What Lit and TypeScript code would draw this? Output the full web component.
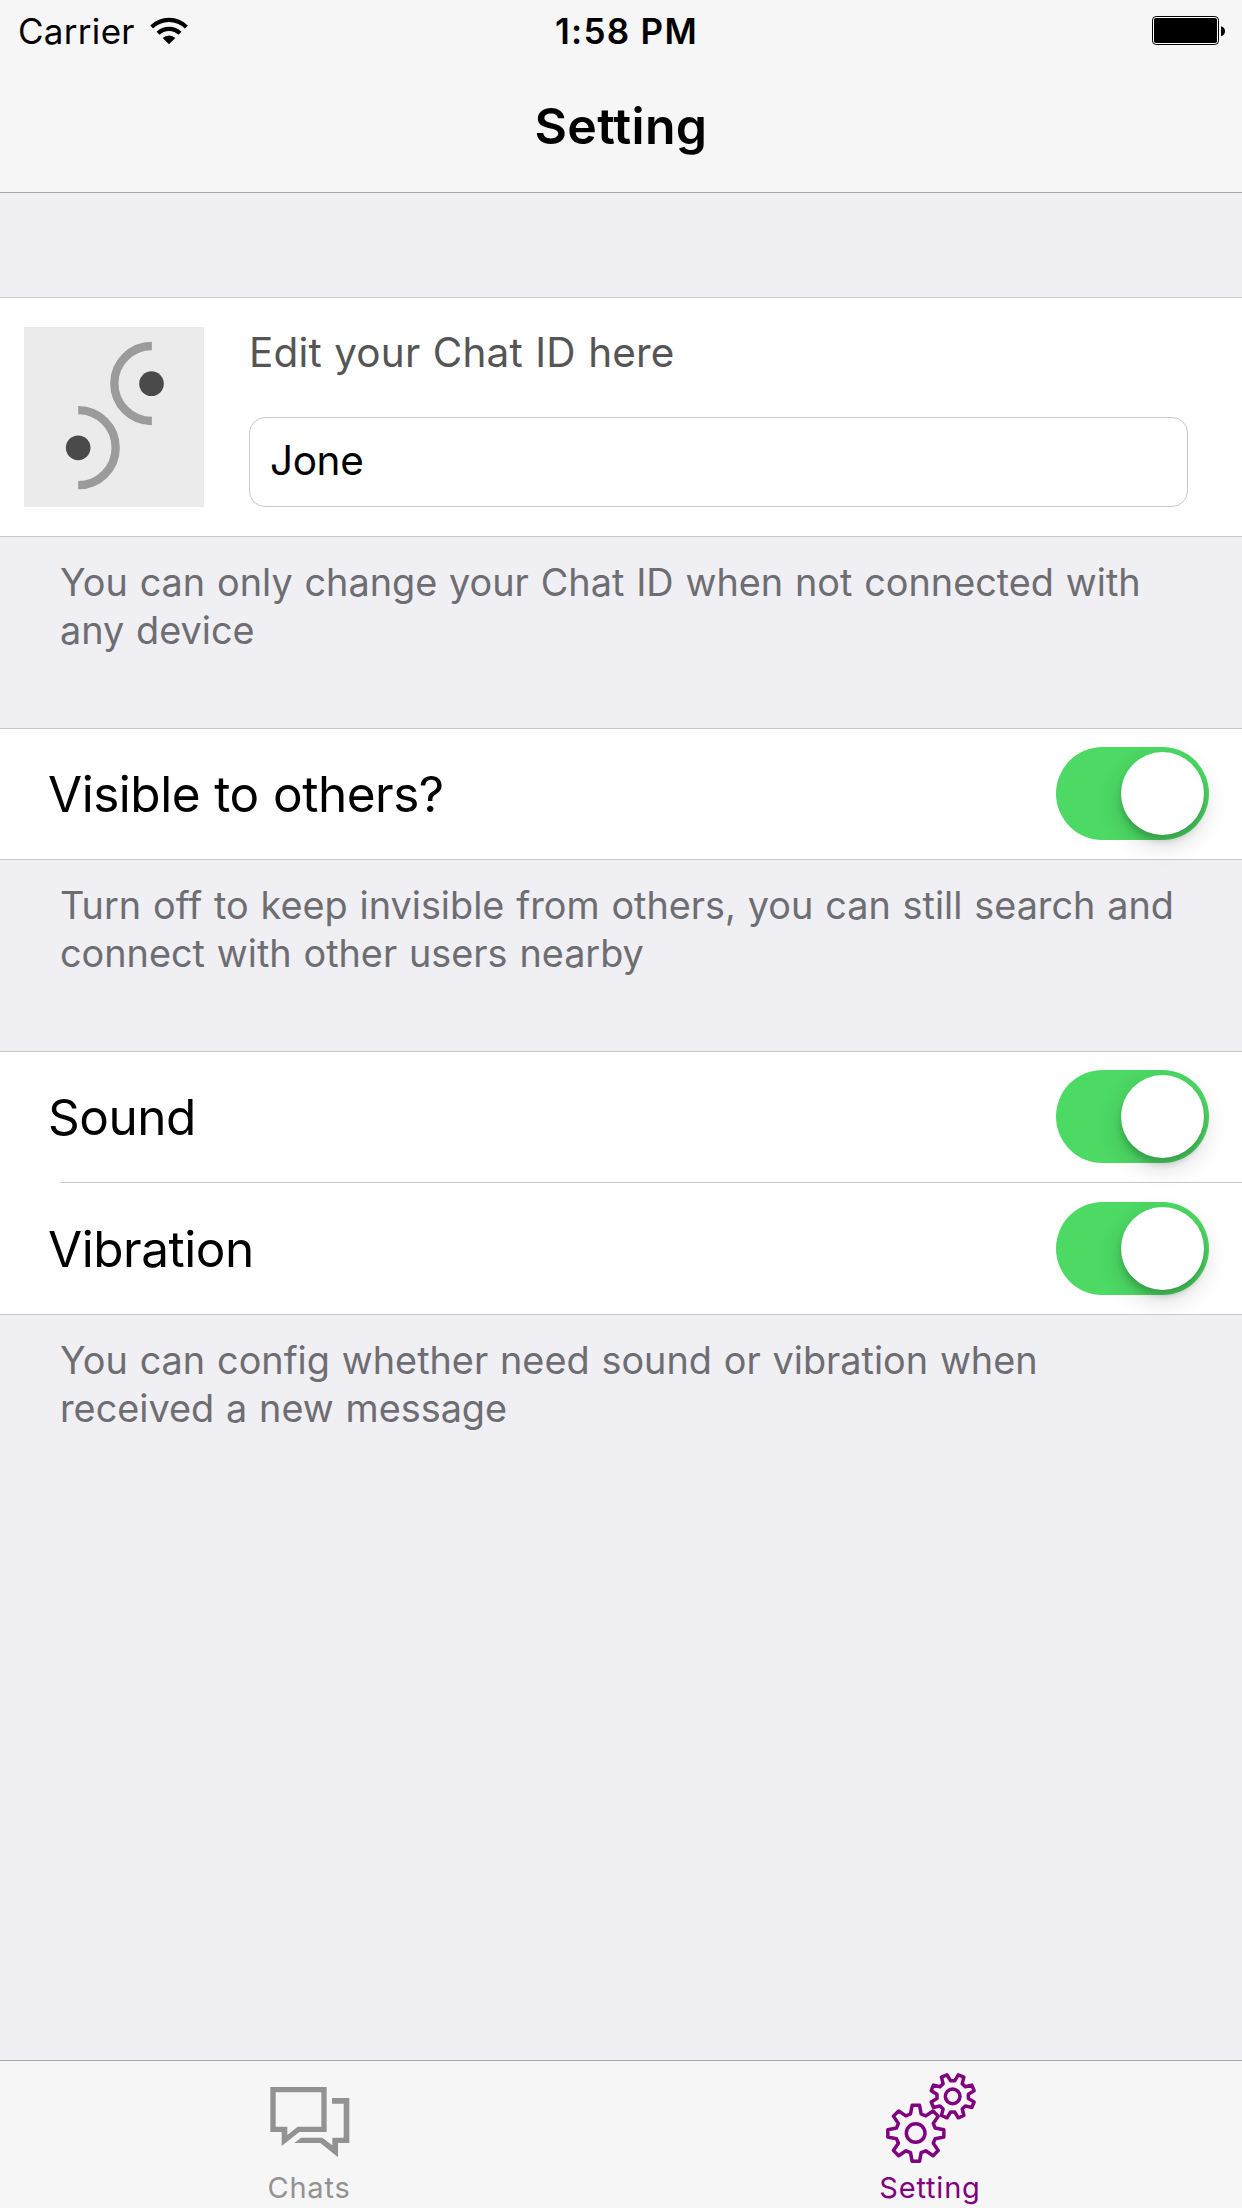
import { LitElement, html, css, svg } from "lit";
import { customElement, property } from "lit/decorators.js";

// Closed outline of a gear with trapezoid teeth, centred on (cx, cy).
function gearPath(cx: number, cy: number, teeth: number, tip: number, root: number, tipHalf: number, rootHalf: number, turn: number): string {
  const points: string[] = [];
  for (let i = 0; i < teeth; i++) {
    const a = turn + (i * 2 * Math.PI) / teeth;
    const corners = [[root, -rootHalf], [tip, -tipHalf], [tip, tipHalf], [root, rootHalf]];
    for (const [r, w] of corners) {
      const x = cx + r * Math.sin(a) + w * Math.cos(a);
      const y = cy - r * Math.cos(a) + w * Math.sin(a);
      points.push(`${x.toFixed(1)},${y.toFixed(1)}`);
    }
  }
  return `M${points.join("L")}Z`;
}

@customElement("ios-switch")
export class IosSwitch extends LitElement {
  static styles = css`
    :host { display: block; flex: none; margin-bottom: 1px; }
    .track {
      box-sizing: border-box; width: 153px; height: 93px; border-radius: 47px;
      background: #4cd964; display: flex; justify-content: flex-end; align-items: center; padding-right: 5px;
    }
    .knob {
      width: 83px; height: 83px; border-radius: 50%; background: #fff;
      box-shadow: 0 9px 24px rgba(0, 0, 0, 0.17), 0 6px 6px rgba(0, 0, 0, 0.16);
    }
  `;
  render() {
    return html`<div class="track" role="switch" aria-checked="true"><div class="knob"></div></div>`;
  }
}

@customElement("setting-row")
export class SettingRow extends LitElement {
  @property() label = "";
  static styles = css`
    :host { display: block; }
    .row { box-sizing: border-box; height: 130px; padding: 0 33px 0 48px; display: flex; align-items: center; justify-content: space-between; }
    .label { font-size: 49.5px; line-height: 60px; letter-spacing: -0.48px; word-spacing: 0.8px; white-space: nowrap; }
  `;
  render() {
    return html`<div class="row"><span class="label">${this.label}</span><ios-switch></ios-switch></div>`;
  }
}

@customElement("app-root")
export class AppRoot extends LitElement {
  static styles = css`
    :host {
      display: flex; flex-direction: column; width: 1242px; height: 2208px; overflow: hidden;
      background: #efeff4; color: #000; font-family: Inter, "Liberation Sans", sans-serif;
    }
    svg { display: block; flex: none; }
    .nav { flex: none; background: #f6f6f7; border-bottom: 1px solid #a7a7aa; }
    .status {
      box-sizing: border-box; height: 60px; padding: 2px 17px 0 18px; display: grid;
      grid-template-columns: 1fr auto 1fr; align-items: center; font-size: 35px; line-height: 42px;
    }
    .carrier { display: flex; align-items: center; gap: 15px; letter-spacing: 0.3px; }
    .time { font-weight: 600; letter-spacing: 1.3px; margin-left: 10px; }
    .battery { justify-self: end; margin-top: -1px; }
    .title { height: 132px; line-height: 132px; text-align: center; font-size: 50px; font-weight: 600; letter-spacing: 0.3px; }
    .group { flex: none; background: #fff; border-top: 1px solid #c8c7cc; border-bottom: 1px solid #c8c7cc; }
    .group-profile { margin-top: 104px; }
    .profile { box-sizing: border-box; height: 238px; padding: 0 54px 29px 24px; display: flex; align-items: flex-end; gap: 45px; }
    .fields { flex: 1; display: flex; flex-direction: column; gap: 34px; }
    .prompt { font-size: 40.5px; line-height: 60px; color: #555; white-space: nowrap; letter-spacing: 0.15px; word-spacing: 0.9px; }
    .input {
      box-sizing: border-box; height: 90px; border: 1px solid #c9c9c9; border-radius: 16px;
      padding: 0 20px 3px; font-size: 40.5px; line-height: 85px; letter-spacing: -0.4px;
    }
    .note { box-sizing: border-box; flex: none; padding: 21px 40px 0 60px; font-size: 37.8px; line-height: 48px; word-spacing: 1.25px; color: #6d6d72; white-space: pre-line; }
    .note-tall { height: 191px; }
    .divider { height: 1px; margin-left: 60px; background: #c8c7cc; }
    .last { padding-top: 1px; }
    .tabs { flex: none; margin-top: auto; height: 147px; border-top: 1px solid #a7a7aa; background: #f6f6f7; display: grid; grid-template-columns: 1fr 1fr; }
    .tab { display: flex; flex-direction: column; align-items: center; padding-right: 3px; font-size: 29px; line-height: 36px; letter-spacing: 0.8px; color: #929292; }
    .tab-active { color: #800080; }
    .tab-label { margin-top: 6px; }
  `;

  render() {
    return html`
      <header class="nav">
        <div class="status">
          <div class="carrier">
            <span>Carrier</span>
            <svg width="38" height="28" viewBox="448 46 114 84" fill="none" stroke="#000" stroke-width="12.5">
              <path d="M453 76A73.5 73.5 0 0 1 557 76" />
              <path d="M472 95A47 47 0 0 1 538 95" />
              <path d="M505 128L486 109A27 27 0 0 1 524 109Z" fill="#000" stroke="none" />
            </svg>
          </div>
          <span class="time">1:58 PM</span>
          <svg class="battery" width="73" height="29" viewBox="156 47 219 87">
            <rect x="157.5" y="48.5" width="198" height="84" rx="11" fill="#fff" stroke="#000" stroke-width="3" />
            <rect x="162" y="53" width="189" height="75" rx="6" />
            <path d="M363 78Q375 81 375 93T363 108Z" />
          </svg>
        </div>
        <div class="title"><span class="title-text">Setting</span></div>
      </header>

      <section class="group group-profile">
        <div class="profile">
          <svg width="180" height="180" viewBox="72 141 540 540">
            <rect x="72" y="141" width="540" height="540" fill="#ebebeb" />
            <g fill="none" stroke="#9b9b9b" stroke-width="25">
              <path d="M455.500 198A112.500 112.500 0 0 0 455.500 423" />
              <path d="M234.500 390.500A112.500 112.500 0 0 1 234.500 615.500" />
            </g>
            <circle cx="454.500" cy="311" r="37" fill="#4a4a4a" />
            <circle cx="234.500" cy="503.500" r="37" fill="#4a4a4a" />
          </svg>
          <div class="fields">
            <span class="prompt">Edit your Chat ID here</span>
            <div class="input">Jone</div>
          </div>
        </div>
      </section>
      <div class="note note-tall">You can only change your Chat ID when not connected with
any device</div>

      <section class="group"><setting-row label="Visible to others?"></setting-row></section>
      <div class="note note-tall">Turn off to keep invisible from others, you can still search and
connect with other users nearby</div>

      <section class="group">
        <setting-row label="Sound"></setting-row>
        <div class="divider"></div>
        <setting-row class="last" label="Vibration"></setting-row>
      </section>
      <div class="note">You can config whether need sound or vibration when
received a new message</div>

      <nav class="tabs">
        <div class="tab">
          <svg width="140" height="103" viewBox="-2 33 420 309" fill="currentColor">
            <path fill-rule="evenodd" d="M92 111H261V246H179L126 288V246H92ZM108 127V230H143V255L174 230H245V127Z" />
            <path d="M277 144H329V279H295V322L242 279H164L184 263H248L278 286V263H312V161H277Z" />
          </svg>
          <span class="tab-label">Chats</span>
        </div>
        <div class="tab tab-active">
          <svg width="140" height="103" viewBox="0 33 420 309" fill="none" stroke="currentColor" stroke-width="10.5" stroke-linejoin="round">
            ${svg`<path d=${gearPath(167.5, 250, 8, 84, 58, 11, 16, 0)} />
            <path d=${gearPath(278, 139, 8, 66, 46, 9, 12, Math.PI / 8)} />`}
            <circle cx="167" cy="249" r="28" />
            <circle cx="278" cy="139" r="22" />
          </svg>
          <span class="tab-label">Setting</span>
        </div>
      </nav>
    `;
  }
}
